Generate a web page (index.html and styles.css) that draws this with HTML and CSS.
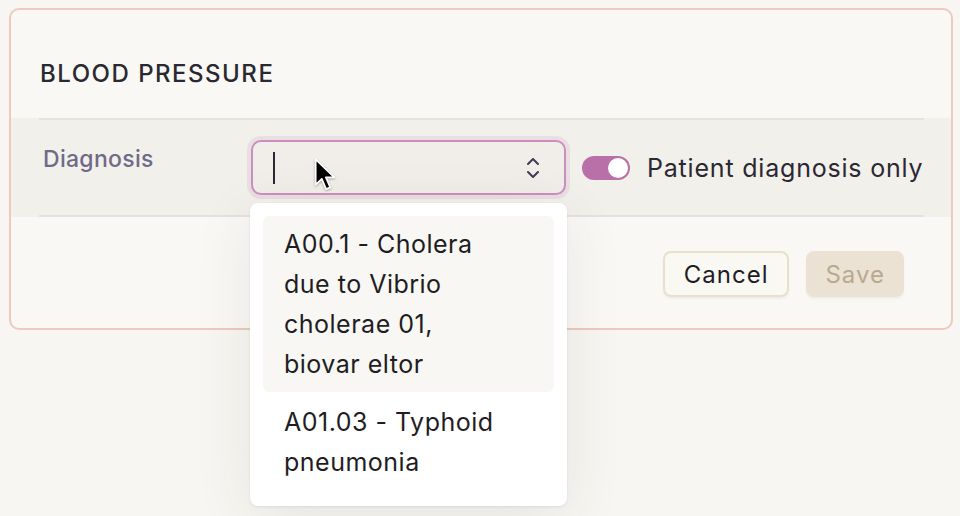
FILE: index.html
```html
<!DOCTYPE html>
<html lang="en">
<head>
  <meta charset="UTF-8">
  <title>Blood Pressure</title>
  <link rel="stylesheet" href="styles.css">
</head>

<body>

<div class="page">
  <div class="card">
    <h2 class="card-title">BLOOD PRESSURE</h2>

    <div class="band">
      <div class="field-row">
        <label class="field-label" for="diagnosis">Diagnosis</label>

        <div class="combo">
          <span class="caret"></span>
          <svg class="chevrons" width="14" height="22" viewBox="0 0 14 22">
            <path d="M2 7 L7 2 L12 7" fill="none" stroke="#3f3a55" stroke-width="2" stroke-linecap="round" stroke-linejoin="round"/>
            <path d="M2 15 L7 20 L12 15" fill="none" stroke="#3f3a55" stroke-width="2" stroke-linecap="round" stroke-linejoin="round"/>
          </svg>

          <!-- mouse pointer -->
          <svg class="pointer" width="22" height="35" viewBox="0 0 13 20">
            <path d="M1 1 L1 16 L4.6 12.6 L7.2 18.6 L9.6 17.6 L7 11.7 L12 11.7 Z" fill="#000" stroke="#fff" stroke-width="1" stroke-linejoin="round"/>
          </svg>

          <ul class="options">
            <li class="option active">A00.1 - Cholera due to Vibrio cholerae 01, biovar eltor</li>
            <li class="option">A01.03 - Typhoid pneumonia</li>
          </ul>
        </div>

        <div class="switch-group">
          <span class="switch"><span class="knob"></span></span>
          <span class="switch-text">Patient diagnosis only</span>
        </div>
      </div>
    </div>

    <div class="actions">
      <button class="btn btn-cancel">Cancel</button>
      <button class="btn btn-save" disabled>Save</button>
    </div>
  </div>
</div>

</body>
</html>
```

FILE: styles.css
```css
body {
  font-family: 'Inter', sans-serif;
  background-color: #f7f6f2;
  color: #2a2833;
  margin: 0;
  padding: 0;
}

.page {
  padding: 8px 7px 0 9px;
  min-height: 516px;
  box-sizing: border-box;
}

.card {
  background-color: #f9f8f5;
  border: 2px solid #eccabd;
  border-radius: 10px;
  padding: 0 27px 31px 28px;
}

.card-title {
  font-size: 24px;
  font-weight: 500;
  letter-spacing: 1.5px;
  line-height: 30px;
  margin: 49px 0 29px 1px;
  color: #2a2830;
}

.band {
  background-color: #f2f0eb;
  margin: 0 -27px 0 -28px;
  padding: 0 27px 0 28px;
}

.field-row {
  display: flex;
  align-items: center;
  border-top: 2px solid #e7e3db;
  border-bottom: 2px solid #e7e3db;
  padding: 20px 0;
}

.field-label {
  width: 208px;
  padding-left: 4px;
  align-self: flex-start;
  padding-top: 4px;
  font-size: 23px;
  font-weight: 500;
  letter-spacing: 0.3px;
  line-height: 30px;
  color: #6f6a87;
}

.combo {
  position: relative;
  width: 315px;
  height: 55px;
  box-sizing: border-box;
  border: 2px solid #c98fc0;
  border-radius: 10px;
  box-shadow: 0 0 0 4px rgba(201, 143, 192, 0.18);
  background-color: #f1eee9;
  display: flex;
  align-items: center;
  padding: 0 24px 0 20px;
}

.caret {
  width: 2px;
  height: 32px;
  background-color: #2a2833;
}

.chevrons {
  margin-left: auto;
}

.pointer {
  position: absolute;
  left: 61px;
  top: 15px;
  filter: drop-shadow(0 1px 1px rgba(0, 0, 0, 0.3));
}

.options {
  position: absolute;
  top: calc(100% + 10px);
  left: -3px;
  width: 317px;
  box-sizing: border-box;
  list-style: none;
  margin: 0;
  padding: 13px 13px 16px;
  background-color: #ffffff;
  border-radius: 8px;
  box-shadow: 0 1px 3px rgba(0, 0, 0, 0.08), 0 12px 60px rgba(60, 50, 30, 0.09);
  z-index: 2;
}

.option {
  font-size: 25px;
  letter-spacing: 0.5px;
  line-height: 40px;
  padding: 8px 50px 8px 21px;
  border-radius: 6px;
  color: #1f1d24;
}

.option + .option {
  margin-top: 2px;
}

.option.active {
  background-color: #f8f7f3;
}

.switch-group {
  display: flex;
  align-items: center;
  margin-left: 16px;
}

.switch {
  width: 48px;
  height: 24px;
  border-radius: 12px;
  background-color: #b96fa8;
  position: relative;
  display: inline-block;
}

.knob {
  position: absolute;
  right: 2px;
  top: 2px;
  width: 20px;
  height: 20px;
  border-radius: 50%;
  background-color: #ffffff;
}

.switch-text {
  margin-left: 17px;
  font-size: 25px;
  letter-spacing: 0.8px;
  line-height: 30px;
  color: #2a2833;
}

.actions {
  display: flex;
  justify-content: flex-end;
  gap: 17px;
  margin-top: 34px;
  padding-right: 20px;
}

.btn {
  font-family: 'Inter', sans-serif;
  font-size: 24px;
  letter-spacing: 1px;
  height: 46px;
  border-radius: 8px;
  padding: 0 19px;
  box-shadow: 0 2px 2px rgba(80, 60, 30, 0.05);
}

.btn-cancel {
  background-color: #faf8f3;
  border: 2px solid #e9dfcc;
  color: #1f1d24;
}

.btn-save {
  background-color: #ebe2d4;
  border: 2px solid #ebe2d4;
  color: #b9a990;
  padding: 0 17px;
}
```
